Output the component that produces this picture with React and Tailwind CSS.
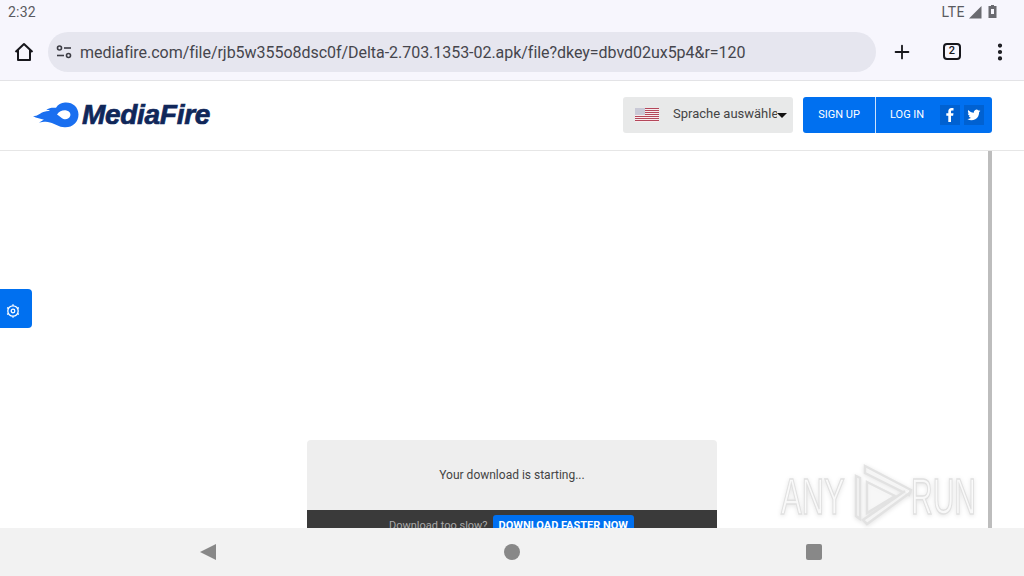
import React from "react";
import { Plus, EllipsisVertical } from "lucide-react";

const FlameLogo = () => (
  <svg width="46" height="26" viewBox="0 0 46 26" className="shrink-0">
    <path
      d="M0 14 C4 14.500 6 12 9 10.500 C12 9 15 9.500 17 8.500 C15.500 8 14.500 8 13 8.300 C16 5.500 20 5.500 23 5.800 C25 2.500 28 .8 32 .5 C39.500 0 45.500 5 45.500 12.500 C45.500 20.500 39 25.800 31.500 25.300 C26 25 22 22 17 20.500 C13 19.300 10 20 6 20.800 C8 19.300 9.500 18.500 11 17.800 C7.500 16.300 3.500 16.500 0 14 Z"
      fill="#1a6ff0"
    />
    <path
      d="M24 12.500 C26.500 9 30 7.800 33.500 8.500 C36.500 9.200 38 11.300 37.300 13.800 C36.500 16.500 33.500 17.800 30.500 17 C28.500 16.400 26.500 14 24 12.500 Z"
      fill="#ffffff"
    />
  </svg>
);

const FlagUs = () => (
  <svg width="24" height="14" viewBox="0 0 24 14">
    <rect width="24" height="14" fill="#fff" />
    {[0, 2, 4, 6, 8, 10, 12].map((y) => (
      <rect key={y} y={y} width="24" height="1.1" fill="#b4475a" />
    ))}
    <rect width="10" height="7" fill="#c9c9d6" />
  </svg>
);

const WatermarkMark = () => (
  <svg width="66" height="66" viewBox="0 0 66 66" fill="#ffffff" fillOpacity="0.5" stroke="#e2e2e2" strokeWidth="2.500">
    <path d="M7 12 V52 L11 55 V14 Z" />
    <path d="M16 2 L62 26 L60 31 L16 9 Z" />
    <path d="M18 18 L46 32 L18 49 Z" />
    <path d="M62 28 L18 60 L14 56 L56 27" />
  </svg>
);

export default function App() {
  return (
    <div className="h-screen w-full flex flex-col overflow-hidden bg-white font-['Roboto',sans-serif] relative">
      {/* android status bar */}
      <div className="h-6 bg-[#f7f6fd] flex items-center justify-between pl-2 pr-[27px] text-[#5a5a60] text-sm">
        <span className="tracking-[0.2px]">2:32</span>
        <div className="flex items-center gap-[3px]">
          <span className="tracking-[0.5px]">LTE</span>
          <svg width="13" height="13" viewBox="0 0 13 13" className="ml-[1px]">
            <path d="M0 12.500 L12.500 0 V12.500 Z" fill="#6a6a70" />
          </svg>
          <svg width="9" height="13" viewBox="0 0 9 13" className="ml-[3px] mb-[2px]">
            <path d="M3 0 H6 V1 H8.500 V13 H0.500 V1 H3 Z" fill="#6a6a70" />
            <rect x="3" y="4" width="3" height="5" fill="#f7f6fd" />
          </svg>
        </div>
      </div>

      {/* browser toolbar */}
      <div className="h-[57px] bg-[#f7f6fd] border-b border-[#e3e3e6] flex items-center pb-[1px]">
        <div className="w-12 flex justify-center">
          <svg width="20" height="20" viewBox="0 0 20 20" fill="none" stroke="#17171c" strokeWidth="2" strokeLinejoin="round">
            <path d="M1.500 10 L10 2 L18.500 10 M4 8 V18 H16 V8" />
          </svg>
        </div>
        <div className="w-[828px] h-10 rounded-full bg-[#e6e6ef] flex items-center pl-2">
          <svg width="16" height="14" viewBox="0 0 16 14" fill="none" stroke="#3c3c44" strokeWidth="1.600">
            <circle cx="3.500" cy="3" r="2" />
            <path d="M8 3 H15" />
            <path d="M1 10.500 H8" />
            <circle cx="12.500" cy="10.500" r="2" />
          </svg>
          <span className="ml-2 mt-[2px] text-base tracking-[-0.035px] text-[#45454c] whitespace-nowrap">
            mediafire.com/file/rjb5w355o8dsc0f/Delta-2.703.1353-02.apk/file?dkey=dbvd02ux5p4&amp;r=120
          </span>
        </div>
        <div className="flex-1 flex items-center pl-[15px]">
          <Plus size={22} strokeWidth={2} className="text-[#17171c]" />
          <div className="ml-[30px] w-[18px] h-[17px] rounded-[4px] border-2 border-[#17171c] flex items-center justify-center text-[11px] font-medium text-[#17171c]">
            2
          </div>
          <EllipsisVertical size={22} strokeWidth={2.600} className="ml-[28px] text-[#17171c]" />
        </div>
      </div>

      {/* site header */}
      <div className="h-[70px] border-b border-[#e6e6e6] flex items-center justify-between pl-[33px] pr-8 pb-[1px]">
        <div className="flex items-center">
          <FlameLogo />
          <span className="ml-[3px] text-[28px] leading-none tracking-[-0.3px] font-black italic text-[#10275a] [-webkit-text-stroke:0.7px_#10275a] font-['Liberation_Sans',sans-serif]">
            MediaFire
          </span>
        </div>
        <div className="flex items-center gap-[10px]">
          <div className="w-[170px] h-9 rounded-[3px] bg-[#e8e9e9] flex items-center pl-3 relative overflow-hidden">
            <FlagUs />
            <span className="ml-[14px] mb-[2px] w-[104px] overflow-hidden whitespace-nowrap text-[13px] text-[#444]">
              Sprache auswählen
            </span>
            <span className="w-0 h-0 border-x-[5px] border-x-transparent border-t-[5px] border-t-[#111]" />
          </div>
          <div className="h-9 w-[189px] rounded-[3px] bg-[#0070f0] flex items-center text-white text-[11px]">
            <div className="w-[73px] h-full flex items-center justify-center border-r border-white/80">SIGN UP</div>
            <span className="ml-[15px] -translate-x-[1px]">LOG IN</span>
            <div className="ml-[15px] w-5 h-5 bg-[#0061d1] flex items-center justify-center">
              <svg width="8" height="14" viewBox="0 0 8 14" fill="#fff">
                <path d="M2.300 14 V7.800 H0.300 V5.300 H2.300 V3.500 C2.300 1.300 3.500 0 5.500 0 H7.500 V2.500 H6.200 C5.300 2.500 5 3 5 3.700 V5.300 H7.500 L7.100 7.800 H5 V14 Z" />
              </svg>
            </div>
            <div className="ml-[4px] w-5 h-5 bg-[#0061d1] flex items-center justify-center">
              <svg width="16" height="14" viewBox="0 0 24 24" fill="#fff">
                <path d="M23 4.900 c-.8.4-1.700.6-2.600.7 .9-.6 1.600-1.400 2-2.500 -.9.500-1.900.9-2.900 1.100 A4.600 4.600 0 0 0 11.700 8.300 C7.900 8.100 4.500 6.300 2.200 3.500 c-1.200 2.100-.6 4.800 1.400 6.100 -.7 0-1.400-.2-2.100-.6 0 2.200 1.600 4.200 3.700 4.600 -.7.200-1.400.2-2.100.1 .6 1.900 2.300 3.200 4.300 3.200 A9.300 9.300 0 0 1 .6 18.800 13 13 0 0 0 20.700 7.300 c.9-.6 1.700-1.400 2.300-2.400 Z" />
              </svg>
            </div>
          </div>
        </div>
      </div>

      {/* page body */}
      <div className="flex-1 min-h-0 relative overflow-hidden">
        <div className="mt-[289px] mx-auto w-[410px]">
          <div className="h-[70px] bg-[#eeeeee] rounded-t-[4px] flex items-center justify-center text-xs text-[#444] pb-[1px]">
            Your download is starting...
          </div>
          <div className="h-[40px] bg-[#3a3a3a] flex justify-center items-start pt-[5px] pr-[1px]">
            <span className="text-[11px] text-[#aaaaaa] leading-[22px]">Download too slow?</span>
            <span className="ml-[5px] h-8 px-[6px] rounded-[3px] bg-[#0070f0] text-white text-[11px] font-bold leading-[22px]">
              DOWNLOAD FASTER NOW
            </span>
          </div>
        </div>
        {/* overlay scrollbar */}
        <div className="absolute top-0 bottom-0 left-[988px] w-1 bg-[#bdbdbd]" />
      </div>

      {/* android nav bar */}
      <div className="h-12 bg-[#f2f2f2] flex items-center justify-center relative z-10">
        <svg width="16" height="16" viewBox="0 0 16 16" className="absolute left-[200px] top-4">
          <path d="M16 0 V16 L0 8 Z" fill="#888888" />
        </svg>
        <div className="w-4 h-4 rounded-full bg-[#888888]" />
        <div className="absolute left-[806px] top-4 w-4 h-4 rounded-[2px] bg-[#888888]" />
      </div>

      {/* settings tab */}
      <div className="absolute left-0 top-[289px] w-8 h-[39px] rounded-r-[4px] bg-[#0070f0] flex items-center pl-[5px] pt-[5px]">
        <svg width="16" height="16" viewBox="0 0 16 16" fill="none" stroke="#fff">
          <circle cx="8" cy="8" r="5.200" strokeWidth="1.300" />
          <circle cx="8" cy="8" r="1.800" strokeWidth="1.300" />
          <path d="M8 1.200 V2.800 M8 13.200 V14.800 M2.100 4.600 L3.500 5.400 M12.500 10.600 L13.900 11.400 M2.100 11.400 L3.500 10.600 M12.500 5.400 L13.900 4.600" strokeWidth="1.300" />
        </svg>
      </div>

      {/* watermark */}
      <div className="absolute left-[781px] top-[464px] flex items-center pointer-events-none z-20 text-[50px] leading-none font-light text-white/60 [-webkit-text-stroke:1.500px_#e0e0e0] drop-shadow-[0_1px_2px_rgba(0,0,0,0.12)] font-['Liberation_Sans',sans-serif]">
        <span className="inline-block w-[64px] origin-left scale-x-[0.62] whitespace-nowrap">ANY</span>
        <span className="ml-[4px]"><WatermarkMark /></span>
        <span className="inline-block -ml-[4px] w-[68px] origin-left scale-x-[0.6] whitespace-nowrap">RUN</span>
      </div>
    </div>
  );
}
